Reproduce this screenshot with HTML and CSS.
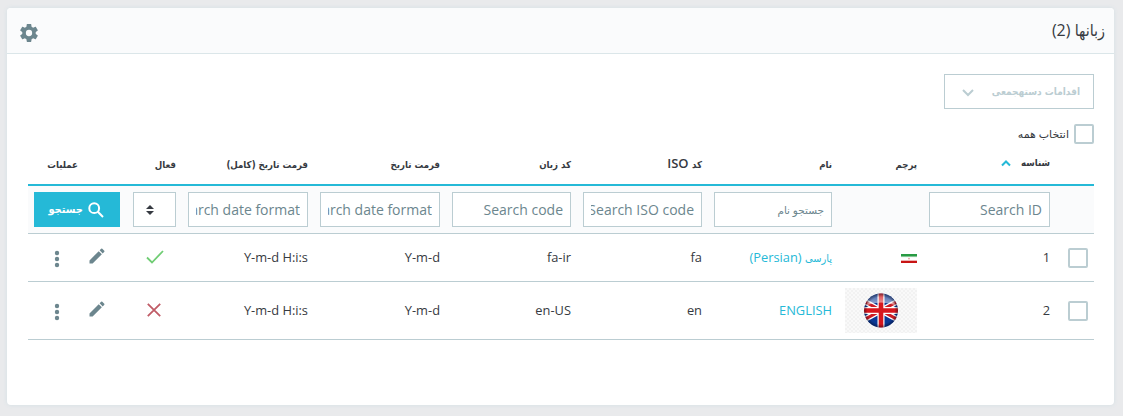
FILE: index.html
```html
<!DOCTYPE html>
<html lang="fa" dir="rtl">
<head>
<meta charset="utf-8">
<title>زبانها</title>
<link rel="stylesheet" href="styles.css">
</head>
<body>
<svg width="0" height="0" class="defs">
  <symbol id="pencil" viewBox="0 0 24 24"><path d="M3 17.25V21h3.75L17.81 9.94l-3.75-3.75L3 17.25zM20.71 7.04a1 1 0 0 0 0-1.41l-2.34-2.34a1 1 0 0 0-1.41 0l-1.83 1.83 3.75 3.75 1.83-1.83z"/></symbol>
  <symbol id="dots" viewBox="0 0 6 18"><circle cx="3" cy="3" r="2.2"/><circle cx="3" cy="9" r="2.2"/><circle cx="3" cy="15" r="2.2"/></symbol>
</svg>
<main class="card">
  <header class="card-header">
    <h3 class="title"><span class="fa-title">زبانها</span> (2)</h3>
    <svg class="gear" viewBox="0 0 24 24"><path d="M19.43 12.98c.04-.32.07-.64.07-.98s-.03-.66-.07-.98l2.11-1.65c.19-.15.24-.42.12-.64l-2-3.46c-.12-.22-.39-.3-.61-.22l-2.49 1c-.52-.4-1.08-.73-1.69-.98l-.38-2.65C14.46 2.18 14.25 2 14 2h-4c-.25 0-.46.18-.49.42l-.38 2.65c-.61.25-1.17.59-1.69.98l-2.49-1c-.23-.09-.49 0-.61.22l-2 3.46c-.13.22-.07.49.12.64l2.11 1.65c-.04.32-.07.65-.07.98s.03.66.07.98l-2.11 1.65c-.19.15-.24.42-.12.64l2 3.46c.12.22.39.3.61.22l2.49-1c.52.4 1.08.73 1.69.98l.38 2.65c.03.24.24.42.49.42h4c.25 0 .46-.18.49-.42l.38-2.65c.61-.25 1.17-.59 1.69-.98l2.49 1c.23.09.49 0 .61-.22l2-3.46c.12-.22.07-.49-.12-.64l-2.11-1.65zM12 15.5a3.5 3.5 0 1 1 0-7 3.5 3.5 0 0 1 0 7z"/></svg>
  </header>
  <div class="card-body">
    <button class="bulk"><span class="fa-bulk">اقدامات دستهجمعی</span><svg viewBox="0 0 12 8"><path d="M1 1l5 5 5-5"/></svg></button>
    <label class="select-all"><span class="check"></span><span class="fa-label">انتخاب همه</span></label>
    <div class="grid">
      <div class="row head">
        <div></div>
        <div class="sorted"><span class="fa-th">شناسه</span><svg viewBox="0 0 10 7"><path d="M1 5.5l4-4 4 4"/></svg></div>
        <div><span class="fa-th">پرچم</span></div>
        <div><span class="fa-th">نام</span></div>
        <div><span class="fa-th">کد</span> ISO</div>
        <div><span class="fa-th">کد زبان</span></div>
        <div><span class="fa-th">فرمت تاریخ</span></div>
        <div><span class="fa-th">فرمت تاریخ (کامل)</span></div>
        <div><span class="fa-th">فعال</span></div>
        <div class="ops"><span class="fa-th">عملیات</span></div>
      </div>
      <div class="row filters">
        <div></div>
        <div><input class="field" placeholder="Search ID"></div>
        <div></div>
        <div><input class="field fa-field" placeholder="جستجو نام"></div>
        <div><input class="field" placeholder="Search ISO code"></div>
        <div><input class="field" placeholder="Search code"></div>
        <div><input class="field" placeholder="Search date format"></div>
        <div><input class="field" placeholder="Search date format"></div>
        <div><span class="select"><svg viewBox="0 0 8 10"><path d="M0 4l4-4 4 4zM0 6h8l-4 4z"/></svg></span></div>
        <div class="search-cell"><button class="search"><svg viewBox="0 0 16 16"><circle cx="6.2" cy="6.2" r="4.9"/><path d="M9.8 9.8l5.2 5.2"/></svg><span class="fa-search">جستجو</span></button></div>
      </div>
      <div class="row first">
        <div><span class="check"></span></div>
        <div class="text">1</div>
        <div><svg class="iran" viewBox="0 0 16 9"><path fill="#fff" d="M0 0h16v9H0z"/><path fill="#289b43" d="M0 0h16v2.6H0z"/><path fill="#8bc79a" d="M0 2.5h16v.6H0z"/><path fill="#c81414" d="M0 6.8h16V9H0z"/><path fill="#e8a0a0" d="M0 6.2h16v.6H0z"/><circle cx="8" cy="4.6" r=".9" fill="#e09a9a"/></svg></div>
        <div class="text name"><span class="fa-name">پارسی</span> (Persian)</div>
        <div class="text">fa</div>
        <div class="text" dir="ltr">fa-ir</div>
        <div class="text" dir="ltr">Y-m-d</div>
        <div class="text" dir="ltr">Y-m-d H:i:s</div>
        <div class="status"><svg class="yes" viewBox="0 0 18 14"><path d="M1 7.5l5 5L17 1"/></svg></div>
        <div class="actions"><svg class="edit"><use href="#pencil"/></svg><svg class="more"><use href="#dots"/></svg></div>
      </div>
      <div class="row second">
        <div><span class="check"></span></div>
        <div class="text">2</div>
        <div><svg class="uk" viewBox="0 0 72 45">
          <defs>
            <pattern id="weave" width="4" height="4" patternUnits="userSpaceOnUse"><path fill="#f9f9f9" d="M0 0h4v4H0z"/><path fill="#f2f2f2" d="M0 0h2v2H0zM2 2h2v2H2z"/></pattern>
            <clipPath id="disc"><circle cx="36" cy="22.5" r="17"/></clipPath>
            <linearGradient id="gloss" x1="0" y1="0" x2="0" y2="1"><stop offset="0" stop-color="#fff" stop-opacity=".2"/><stop offset="1" stop-color="#fff" stop-opacity=".6"/></linearGradient>
            <radialGradient id="edge"><stop offset=".8" stop-color="#001" stop-opacity="0"/><stop offset="1" stop-color="#001" stop-opacity=".45"/></radialGradient>
          </defs>
          <path fill="url(#weave)" d="M0 0h72v45H0z"/>
          <g clip-path="url(#disc)">
            <path fill="#0b3894" d="M18 4h36v37H18z"/>
            <path stroke="#fff" stroke-width="5.6" d="M14 10.5l44 24M58 10.5l-44 24"/>
            <path stroke="#cc1b24" stroke-width="3" d="M14 10.5l44 24M58 10.5l-44 24"/>
            <path stroke="#fff" stroke-width="7" d="M36 4v37M18 22.5h36"/>
            <path stroke="#d6161d" stroke-width="4.6" d="M36 4v37M18 22.5h36"/>
            <path fill="url(#gloss)" d="M22 17C22 2 50 2 50 17Q36 12 22 17z"/>
            <circle cx="36" cy="22.5" r="17" fill="url(#edge)"/>
          </g>
        </svg></div>
        <div class="text name">ENGLISH</div>
        <div class="text">en</div>
        <div class="text" dir="ltr">en-US</div>
        <div class="text" dir="ltr">Y-m-d</div>
        <div class="text" dir="ltr">Y-m-d H:i:s</div>
        <div class="status"><svg class="no" viewBox="0 0 14 14"><path d="M.8.8l12.4 12.4M13.2.8L.8 13.2"/></svg></div>
        <div class="actions"><svg class="edit"><use href="#pencil"/></svg><svg class="more"><use href="#dots"/></svg></div>
      </div>
    </div>
  </div>
</main>
</body>
</html>
```
FILE: styles.css
```css
* { box-sizing: border-box; }
body {
  margin: 0;
  padding: 8px 9px 11px 7px;
  height: 416px;
  overflow: hidden;
  background: #e9eaec;
  color: #363a41;
  font: 13px/18px "Open Sans", "DejaVu Sans", sans-serif;
}
.defs { position: absolute; }
svg { display: block; flex: none; }
.card {
  height: 397px;
  overflow: hidden;
  border-radius: 4px;
  background: #fff;
  box-shadow: 0 0 4px 0 #d3dfe4;
}
.card-header {
  display: flex;
  align-items: center;
  justify-content: space-between;
  height: 46px;
  padding: 0 9px 0 12px;
  border-bottom: 1px solid #dbe6e9;
  background: #fafbfc;
}
.title { margin: 0 0 1px; font-size: 16px; font-weight: 500; white-space: nowrap; }
.gear { width: 20px; height: 20px; margin-top: 4px; margin-right: auto; fill: #6c868e; overflow: visible; transform: scale(1.08); }
.card-body { padding: 20px 20px 0 21px; }
.bulk {
  display: flex;
  align-items: center;
  justify-content: space-between;
  width: 150px;
  height: 35px;
  padding: 0 13px 0 17px;
  border: 1px solid #bbcdd2;
  background: #fff;
  color: #bbcdd2;
  font-family: inherit;
  white-space: nowrap;
}
.bulk svg { width: 12px; height: 8px; margin-top: 3px; fill: none; stroke: #bbcdd2; stroke-width: 2; }
.select-all { display: flex; align-items: center; gap: 5px; height: 20px; margin-top: 15px; }
.check { display: block; width: 20px; height: 20px; border: 2px solid #bbcdd2; border-radius: 2px; background: #fff; }
.row {
  display: grid;
  grid-template-columns: 38px 133px 85px 130px 131px 131px 132px 132px 55px 99px;
  align-items: center;
  border-bottom: 1px solid #bbcdd2;
}
.row > div { padding: 0 6px; white-space: nowrap; text-align: right; }
.row > .text { padding-bottom: 1px; font-size: 12.85px; }
.head { height: 42px; padding-bottom: 2px; border-bottom: 2px solid #25b9d7; font-weight: 600; }
.head > .sorted { display: flex; align-items: center; gap: 10px; }
.head svg { width: 10px; height: 7px; fill: none; stroke: #25b9d7; stroke-width: 2; }
.row > .ops { padding-right: 49px; }
.filters { height: 48px; background: #fafbfc; }
.row > .search-cell { padding-right: 7px; }
.field {
  display: block;
  width: 100%;
  height: 35px;
  padding: 0 7px;
  border: 1px solid #bbcdd2;
  border-radius: 0;
  background: #fff;
  font: 14px "Open Sans", "DejaVu Sans", sans-serif;
}
.field::placeholder { color: #6c868e; opacity: 1; }
.select { display: flex; align-items: center; width: 43px; height: 35px; padding-right: 21px; border: 1px solid #bbcdd2; background: #fff; }
.select svg { width: 8px; height: 10px; fill: #363a41; }
.search {
  display: flex;
  align-items: center;
  gap: 5px;
  width: 86px;
  height: 35px;
  padding: 0 16px 0 0;
  border: 0;
  background: #25b9d7;
  color: #fff;
  font-family: inherit;
}
.search svg { width: 16px; height: 16px; fill: none; stroke: #fff; stroke-width: 2; }
.first { height: 48px; }
.second { height: 58px; }
.iran { width: 16px; height: 9px; margin-top: 1px; }
.uk { width: 72px; height: 45px; }
.name { color: #25b9d7; }
.yes, .no { fill: none; }
.yes { width: 18px; height: 14px; margin: 0 12px 1px 0; stroke: #70cd74; stroke-width: 1.8; }
.no { width: 14px; height: 14px; margin: 0 15px 2px 0; stroke: #c05c67; stroke-width: 1.8; }
.actions { display: flex; align-items: center; }
.row > .actions { padding-right: 20px; }
.edit, .more { fill: #6c868e; }
.edit { width: 20px; height: 20px; margin-bottom: 3px; }
.more { width: 6px; height: 18px; margin: 2px 27px 0 0; }
.fa-title, .fa-bulk, .fa-th, .fa-search, .fa-name {
  font-family: "DejaVu Sans Condensed", "DejaVu Sans", sans-serif;
  font-stretch: condensed;
  line-height: 1;
}
.fa-title { font-size: 16px; }
.fa-bulk { font-size: 10px; font-weight: 700; }
.fa-label { font-size: 11px; }
.fa-name { font-size: 11px; }
.fa-th { font-size: 9.6px; font-weight: 700; }
.fa-field { font-size: 10.5px; }
.fa-search { font-size: 11px; font-weight: 700; }
```
